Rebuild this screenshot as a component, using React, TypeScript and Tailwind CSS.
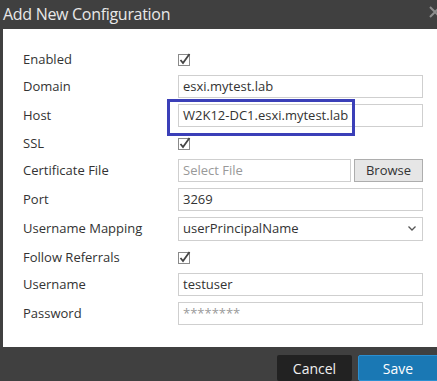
import React from "react";

type Row =
  | { label: string; kind: "check" }
  | { label: string; kind: "text"; value?: string; placeholder?: string }
  | { label: string; kind: "file" }
  | { label: string; kind: "select"; value: string };

const ROWS: Row[] = [
  { label: "Enabled", kind: "check" },
  { label: "Domain", kind: "text", value: "esxi.mytest.lab" },
  { label: "Host", kind: "text", value: "W2K12-DC1.esxi.mytest.lab" },
  { label: "SSL", kind: "check" },
  { label: "Certificate File", kind: "file" },
  { label: "Port", kind: "text", value: "3269" },
  { label: "Username Mapping", kind: "select", value: "userPrincipalName" },
  { label: "Follow Referrals", kind: "check" },
  { label: "Username", kind: "text", value: "testuser" },
  { label: "Password", kind: "text", placeholder: "********" },
];

function Check() {
  return (
    <svg width="14" height="13" viewBox="0 0 14 13" className="mt-[4px] block">
      <rect x="0.5" y="1.5" width="11" height="11" fill="#fff" stroke="#8a8a8a" />
      <path d="M2.5 7 L5 10 L11.5 1" fill="none" stroke="#444" strokeWidth="1.8" />
    </svg>
  );
}

function Field({ row }: { row: Row }) {
  if (row.kind === "check") return <Check />;
  if (row.kind === "file") {
    return (
      <div className="flex h-[23px] gap-[3px]">
        <div className="flex flex-1 items-center border border-[#cfcfcf] px-[4px] text-[#999]">Select File</div>
        <div className="flex w-[69px] items-center justify-center border border-[#adadad] bg-[#e6e6e6] text-[#333]">Browse</div>
      </div>
    );
  }
  if (row.kind === "select") {
    return (
      <div className="flex h-[24px] items-center justify-between border border-[#cfcfcf] pl-[4px] pr-[6px] text-[#333]">
        <span>{row.value}</span>
        <svg width="8" height="5" viewBox="0 0 8 5">
          <path d="M0.5 0.5 L4 4 L7.5 0.5" fill="none" stroke="#555" strokeWidth="1.3" />
        </svg>
      </div>
    );
  }
  return (
    <div className="flex h-[23px] items-center border border-[#cfcfcf] px-[4px]">
      {row.value ? (
        <span className="text-[#333]">{row.value}</span>
      ) : (
        <span className="text-[#9a9a9a]">{row.placeholder}</span>
      )}
    </div>
  );
}

export default function App() {
  return (
    <div
      className="flex h-[381px] w-[437px] flex-col overflow-hidden bg-[#404040] text-[13px]"
      style={{ fontFamily: '"Open Sans", "Noto Sans", sans-serif' }}
    >
      <div className="relative flex h-[29px] items-center pl-[3px]">
        <span className="text-[16px] tracking-[-0.3px] text-[#e8e8e8]">Add New Configuration</span>
        <svg width="12" height="12" viewBox="0 0 12 12" className="absolute left-[429px] top-[6px]">
          <path d="M1 1 L11 11 M11 1 L1 11" stroke="#8d8d8d" strokeWidth="2" />
        </svg>
      </div>
      <div className="relative ml-[3px] flex h-[320px] flex-col gap-[6px] bg-white pl-[20px] pr-[14px] pt-[20px]">
        {ROWS.map((row) => (
          <div
            key={row.label}
            className={`flex ${row.kind === "check" ? "h-[20px] items-start" : "items-center"}`}
          >
            <div className={`w-[155px] shrink-0 text-[#333] ${row.kind === "check" ? "pt-[1px]" : ""}`}>{row.label}</div>
            <div className="flex-1">
              <Field row={row} />
            </div>
          </div>
        ))}
        <div className="absolute left-[164px] top-[70px] h-[37px] w-[188px] border-[3px] border-[#3b3fb8]" />
      </div>
      <div className="flex gap-[6px] pl-[277px] pt-[8px]">
        <div className="flex h-[26px] w-[75px] shrink-0 items-center justify-center rounded-[2px] bg-[#222] text-[14px] text-[#f0f0f0]">
          Cancel
        </div>
        <div className="flex h-[26px] w-[86px] shrink-0 items-center justify-center rounded-[2px] border border-[#2b8fd1] bg-[#1a78b4] pr-[6px] text-[14px] text-white">
          Save
        </div>
      </div>
    </div>
  );
}
